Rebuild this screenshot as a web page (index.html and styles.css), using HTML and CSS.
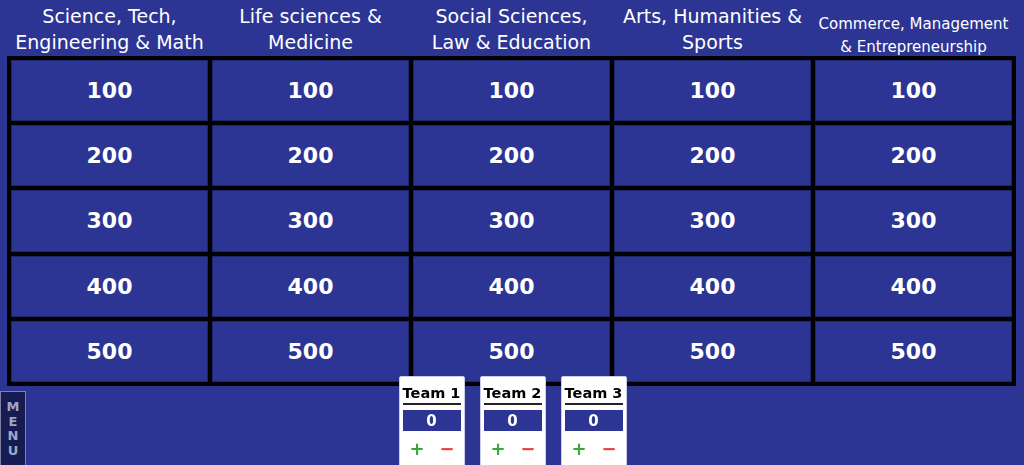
FILE: index.html
```html
<!DOCTYPE html>
<html>
<head>
<meta charset="utf-8">
<link rel="stylesheet" href="styles.css">
</head>
<body>
<div class="page">
  <div class="heads">
    <div class="head">Science, Tech,<br>Engineering &amp; Math</div>
    <div class="head">Life sciences &amp;<br>Medicine</div>
    <div class="head">Social Sciences,<br>Law &amp; Education</div>
    <div class="head">Arts, Humanities &amp;<br>Sports</div>
    <div class="head small">Commerce, Management<br>&amp; Entrepreneurship</div>
  </div>
  <div class="board">
    <div class="cell">100</div><div class="cell">100</div><div class="cell">100</div><div class="cell">100</div><div class="cell">100</div>
    <div class="cell">200</div><div class="cell">200</div><div class="cell">200</div><div class="cell">200</div><div class="cell">200</div>
    <div class="cell">300</div><div class="cell">300</div><div class="cell">300</div><div class="cell">300</div><div class="cell">300</div>
    <div class="cell">400</div><div class="cell">400</div><div class="cell">400</div><div class="cell">400</div><div class="cell">400</div>
    <div class="cell">500</div><div class="cell">500</div><div class="cell">500</div><div class="cell">500</div><div class="cell">500</div>
  </div>
</div>
<div class="teams">
  <div class="team">
    <div class="team-name">Team 1</div>
    <div class="score">0</div>
    <div class="controls"><span class="plus">+</span><span class="minus">−</span></div>
  </div>
  <div class="team">
    <div class="team-name">Team 2</div>
    <div class="score">0</div>
    <div class="controls"><span class="plus">+</span><span class="minus">−</span></div>
  </div>
  <div class="team">
    <div class="team-name">Team 3</div>
    <div class="score">0</div>
    <div class="controls"><span class="plus">+</span><span class="minus">−</span></div>
  </div>
</div>
<div class="menu"><span>M</span><span>E</span><span>N</span><span>U</span></div>
</body>
</html>
```

FILE: styles.css
```css
html, body {
  margin: 0;
  padding: 0;
  height: 100%;
  overflow: hidden;
}
body {
  background: #2c3594;
  font-family: "DejaVu Sans", Verdana, sans-serif;
  color: #fff;
}
.page {
  display: flex;
  flex-direction: column;
}
.heads {
  display: grid;
  grid-template-columns: repeat(5, 197px);
  column-gap: 4px;
  padding-left: 11px;
  height: 56px;
  align-items: end;
}
.head {
  font-size: 19px;
  line-height: 26px;
  text-align: center;
  white-space: nowrap;
  padding-bottom: 1px;
}
.head.small {
  font-size: 15px;
  line-height: 23px;
  margin-bottom: -4px;
}
.board {
  margin-left: 7px;
  width: 1009px;
  height: 330px;
  box-sizing: border-box;
  background: #000;
  padding: 4px;
  display: grid;
  grid-template-columns: repeat(5, 1fr);
  grid-template-rows: repeat(5, 1fr);
  gap: 4px;
}
.cell {
  background: #2c3594;
  border: 1px solid #1f2670;
  display: flex;
  align-items: center;
  justify-content: center;
  font-weight: bold;
  font-size: 22px;
}
.teams {
  position: fixed;
  left: 0;
  right: 0;
  top: 376px;
  display: flex;
  justify-content: center;
  gap: 15px;
  padding-left: 1px;
}
.team {
  width: 66px;
  height: 100px;
  box-sizing: border-box;
  background: #fff;
  border: 1px solid #c9cde6;
  border-radius: 2px;
  padding: 0 3px;
  color: #000;
}
.team-name {
  font-weight: bold;
  font-size: 14.5px;
  line-height: 18px;
  padding-top: 7px;
  padding-bottom: 1px;
  text-align: center;
  white-space: nowrap;
  border-bottom: 2px solid #222;
}
.score {
  margin-top: 5px;
  height: 21px;
  background: #2c3594;
  color: #fff;
  font-weight: bold;
  font-size: 15px;
  display: flex;
  align-items: center;
  justify-content: center;
}
.controls {
  display: flex;
  justify-content: space-between;
  padding: 0 6px 0 7px;
  margin-top: 6px;
  font-weight: bold;
  font-size: 18px;
  line-height: 24px;
}
.plus { color: #3aa83a; }
.minus { color: #ee3b3b; }
.menu {
  position: fixed;
  left: 0;
  top: 391px;
  width: 26px;
  height: 80px;
  box-sizing: border-box;
  background: #161c52;
  border: 1px solid #7d82a4;
  display: flex;
  flex-direction: column;
  align-items: center;
  padding-top: 8px;
  font-weight: bold;
  font-size: 13px;
  line-height: 14.5px;
  color: #a3a6c2;
}
```
